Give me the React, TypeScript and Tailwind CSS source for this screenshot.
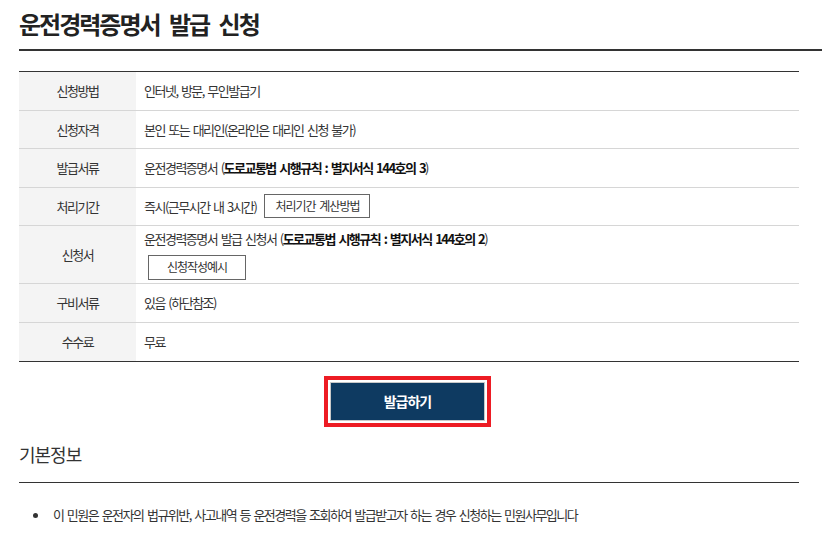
import React from "react";

type Row = {
  label: string;
  content: React.ReactNode;
  tall?: boolean;
};

const LineButton = ({ children, className = "" }: { children: React.ReactNode; className?: string }) => (
  <button
    className={`inline-flex items-center justify-center border border-[#666] bg-white text-[12px] tracking-[-1px] [word-spacing:2px] text-[#333] ${className}`}
  >
    {children}
  </button>
);

const rows: Row[] = [
  { label: "신청방법", content: "인터넷, 방문, 무인발급기" },
  { label: "신청자격", content: "본인 또는 대리인(온라인은 대리인 신청 불가)" },
  {
    label: "발급서류",
    content: (
      <span>
        운전경력증명서 (<b className="font-bold text-[#111]">도로교통법 시행규칙 : 별지서식 144호의 3</b>)
      </span>
    ),
  },
  {
    label: "처리기간",
    content: (
      <div className="flex items-center gap-[8px]">
        <span>즉시(근무시간 내 3시간)</span>
        <LineButton className="h-[24px] w-[106px]">처리기간 계산방법</LineButton>
      </div>
    ),
  },
  {
    label: "신청서",
    tall: true,
    content: (
      <div className="flex flex-col items-start">
        <span className="leading-[18px]">
          운전경력증명서 발급 신청서 (<b className="font-bold text-[#111]">도로교통법 시행규칙 : 별지서식 144호의 2</b>)
        </span>
        <LineButton className="ml-[4px] mt-[7px] h-[25px] w-[98px]">신청작성예시</LineButton>
      </div>
    ),
  },
  { label: "구비서류", content: "있음 (하단참조)" },
  { label: "수수료", content: "무료" },
];

export default function App() {
  return (
    <div className="min-h-[542px] w-[822px] overflow-hidden bg-white font-['Noto_Sans_CJK_KR',sans-serif] text-[#333]">
      {/* page title */}
      <div className="ml-[19px] flex h-[51px] items-center border-b-2 border-[#333]">
        <h1 className="pb-[2px] text-[24px] font-bold tracking-[-2px] [word-spacing:6px] text-[#222]">
          운전경력증명서 발급 신청
        </h1>
      </div>

      <div className="ml-[19px] w-[780px]">
        {/* summary table */}
        <div className="mt-[20px] border-t border-b border-[#333]">
          {rows.map((r, i) => (
            <div
              key={r.label}
              className={`flex ${r.tall ? "h-[58px]" : "h-[38.5px]"} ${
                i < rows.length - 1 ? "border-b border-[#d6d6d6]" : ""
              }`}
            >
              <div className="flex w-[117px] shrink-0 items-center justify-center bg-[#f4f4f4] text-[13px] tracking-[-1.5px] text-[#333]">
                {r.label}
              </div>
              <div className="flex flex-1 items-center pl-[8px] text-[13px] tracking-[-1.5px] [word-spacing:2px] text-[#333]">
                {r.content}
              </div>
            </div>
          ))}
        </div>

        {/* issue button */}
        <div className="mt-[14px] flex justify-center">
          <div className="mr-[3px] border-4 border-[#ed1c24] p-[2px]">
            <button className="flex h-[39px] w-[155px] items-center justify-center border border-[#c8c8c8] bg-[#0e3a61] text-[14px] font-bold tracking-[-1px] text-white">
              발급하기
            </button>
          </div>
        </div>

        {/* basic info */}
        <h2 className="mt-[13px] border-b border-[#333] pb-[14px] text-[18px] leading-[28px] tracking-[-1px] text-[#333]">
          기본정보
        </h2>
        <ul className="mt-[23px]">
          <li className="flex items-center text-[13px] leading-[18px] tracking-[-1.5px] [word-spacing:2px] text-[#333]">
            <span className="ml-[14px] mr-[15px] h-[5px] w-[5px] shrink-0 rounded-full bg-[#333]" />
            이 민원은 운전자의 법규위반, 사고내역 등 운전경력을 조회하여 발급받고자 하는 경우 신청하는 민원사무입니다
          </li>
        </ul>
      </div>
    </div>
  );
}
